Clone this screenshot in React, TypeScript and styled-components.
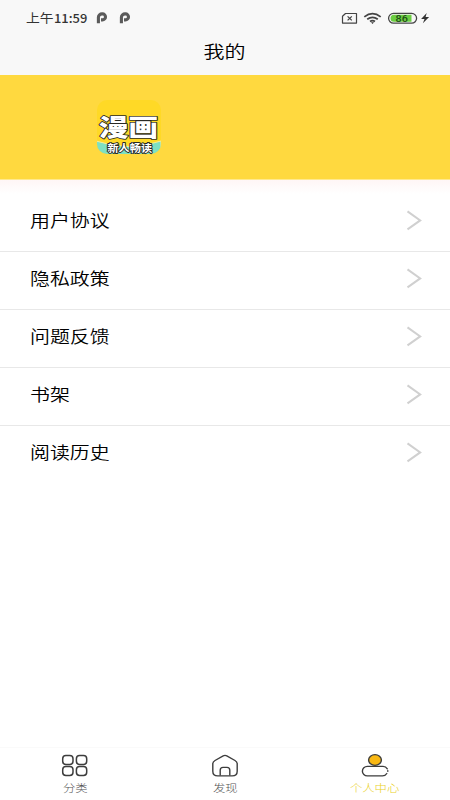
import React from 'react';
import styled, { createGlobalStyle } from 'styled-components';

const Global = createGlobalStyle`
  * { box-sizing: border-box; }
  body { margin: 0; background: #fff; font-family: "Noto Sans CJK SC", sans-serif; }
`;

const Screen = styled.div`
  width: 450px;
  height: 800px;
  display: flex;
  flex-direction: column;
  background: #fff;
  overflow: hidden;
`;

const StatusBar = styled.div`
  height: 36px;
  flex: none;
  display: flex;
  align-items: center;
  justify-content: space-between;
  padding: 0 20px 0 26px;
  background: #f8f8f8;
`;

const StatusGroup = styled.div`
  display: flex;
  align-items: center;
`;

const Wide = styled.span<{ $size: number; $scale: number; $color?: string; $origin?: string; $weight?: number }>`
  display: block;
  white-space: nowrap;
  font-size: ${p => p.$size}px;
  font-weight: ${p => p.$weight ?? 400};
  line-height: 1.4;
  color: ${p => p.$color ?? '#000'};
  transform: scaleX(${p => p.$scale});
  transform-origin: ${p => p.$origin ?? 'left'} center;
`;

const Clock = styled.div`
  width: 70px;
  display: flex;
  align-items: center;
  padding-top: 1px;
`;

const Ampm = styled.div`
  width: 28px;
`;

const TitleBar = styled.header`
  height: 39px;
  flex: none;
  display: flex;
  justify-content: center;
  padding: 3px 1px 0 0;
  background: #f8f8f8;
`;

const Banner = styled.section`
  height: 105px;
  flex: none;
  padding: 24px 0 0 96px;
  background: linear-gradient(#ffd93f 104px, #ffe98f 104px);
`;

const List = styled.main`
  flex: 1;
  padding-top: 14px;
  background: linear-gradient(#fff6f6, #fff 14px);
`;

const Row = styled.div<{ $last: boolean }>`
  height: 58px;
  display: flex;
  align-items: center;
  justify-content: space-between;
  padding: 0 28px 4px 30px;
  border-bottom: 1px solid ${p => (p.$last ? 'transparent' : '#e8e8e8')};
`;

const TabBar = styled.nav`
  height: 53px;
  flex: none;
  display: grid;
  grid-template-columns: repeat(3, 1fr);
  border-top: 1px solid #fafafa;
`;

const Tab = styled.div`
  display: flex;
  flex-direction: column;
  align-items: center;
  padding-top: 5px;
  gap: 4px;
`;

const Glyph = styled.svg`
  display: block;
  flex: none;
  overflow: visible;
`;

const Carrier = styled(Glyph)`
  margin-right: 11px;
`;

const PMark = () => (
  <Carrier width="12" height="13" viewBox="0 0 12 13" fill="none">
    <path d="M2.4 12.3V6.2A3.6 3.4 0 0 1 6 2.9h.5a3 3 0 0 1 0 6H5" stroke="#5a5a5a" strokeWidth="3.1" />
  </Carrier>
);

const StatusIcons = () => (
  <Glyph width="88" height="16" viewBox="342 10 88 16" fill="none" stroke="#444">
    <path d="M345.5 13.5h11v9.6h-14v-6.8z" strokeWidth="1.2" strokeLinejoin="round" />
    <path d="M347.6 16.4l4.2 4m0-4l-4.2 4" strokeWidth="1.3" />
    <path d="M364.3 16.8q8.2-6.4 16.4 0M367.2 19.3q5.3-4 10.6 0M370 21.5q2.5-1.9 5 0" strokeWidth="1.7" />
    <path d="M371 22.3h3l-1.5 1.7z" fill="#333" stroke="none" />
    <rect x="388.6" y="13.4" width="28" height="9.8" rx="4.9" strokeWidth="1.3" fill="#f8f8f8" />
    <path d="M394 14.8h17.5v7H394a3.5 3.5 0 0 1 0-7z" fill="#6bcd42" stroke="none" />
    <text x="395.6" y="21.8" fontFamily="Roboto, sans-serif" fontSize="9.6" fontWeight="500" textLength="12.3" lengthAdjust="spacingAndGlyphs" fill="#1e4d14" stroke="none">86</text>
    <path d="M426.7 13l-5.6 6h3.4l-1.6 4.2 6.2-6.2h-3.5z" fill="#333" stroke="none" />
  </Glyph>
);

const Logo = () => (
  <Glyph width="65" height="56" viewBox="0 0 65 56" fontFamily="Noto Sans CJK SC, sans-serif">
    <defs>
      <clipPath id="logoShape"><rect x="1" y="1" width="64" height="54" rx="10" /></clipPath>
    </defs>
    <rect x="1" y="1" width="64" height="54" rx="10" fill="#ffd926" />
    <path d="M0 42Q33 53 65 42V56H0z" fill="#7ee0c2" stroke="#f5ef9b" strokeWidth="1" clipPath="url(#logoShape)" />
    <g fill="#fff" stroke="#292923" strokeLinejoin="round" paintOrder="stroke">
      <text transform="translate(3 36.8) scale(1.25 1)" fontSize="23.6" fontWeight="900" strokeWidth="1.7">漫画</text>
      <text transform="translate(11.4 53) scale(1.14 1)" fontSize="9.8" fontWeight="700" strokeWidth="1.8">新人畅读</text>
    </g>
  </Glyph>
);

const Chevron = () => (
  <Glyph width="15" height="20" viewBox="0 0 15 20" fill="none">
    <path d="M.5 .4L13.2 9.4 .5 18.4" stroke="#d0d0d0" strokeWidth="2" />
  </Glyph>
);

const GridIcon = () => (
  <Glyph width="28" height="24" viewBox="0 0 28 24" fill="none" stroke="#3d3d3d" strokeWidth="1.5">
    <rect x="1.7" y="2.6" width="10.3" height="8.8" rx="3.2" />
    <rect x="15.4" y="2.6" width="10.3" height="8.8" rx="3.2" />
    <rect x="1.7" y="13.6" width="10.3" height="8.8" rx="3.2" />
    <rect x="15.4" y="13.6" width="10.3" height="8.8" rx="3.2" />
  </Glyph>
);

const HomeIcon = () => (
  <Glyph width="28" height="24" viewBox="0 0 28 24" fill="none" stroke="#3d3d3d" strokeWidth="1.4">
    <path d="M12.2 2.8Q14 2 15.8 2.8L24 7.5Q26.2 8.8 26.2 10.8V18.3Q26.2 22.9 21.2 22.9H6.8Q1.8 22.9 1.8 18.3V10.8Q1.8 8.8 4 7.5z" />
    <path d="M9.2 22.5V17.2Q9.2 14.4 12 14.4h4Q18.8 14.4 18.8 17.2V22.5" />
  </Glyph>
);

const PersonIcon = () => (
  <Glyph width="28" height="24" viewBox="0 0 28 24" stroke="#3d3d3d" strokeWidth="1.4">
    <ellipse cx="14" cy="7" rx="6.4" ry="5.4" fill="#f9b813" />
    <path d="M25.8 20.5Q24.4 22.9 21.5 22.9H6.3a4.9 4.75 0 0 1 0-9.5h15.4a5 4.8 0 0 1 4.6 2.4" fill="none" strokeLinecap="round" />
    <path d="M26.8 17.8v.5" strokeLinecap="round" />
  </Glyph>
);

const entries = ['用户协议', '隐私政策', '问题反馈', '书架', '阅读历史'];

const tabs = [
  { label: '分类', Icon: GridIcon, color: '#555' },
  { label: '发现', Icon: HomeIcon, color: '#555' },
  { label: '个人中心', Icon: PersonIcon, color: '#ead11f' },
];

export default function App() {
  return (
    <Screen>
      <Global />
      <StatusBar>
        <StatusGroup>
          <Clock>
            <Ampm><Wide $size={12} $scale={1.15} $color="#333">上午</Wide></Ampm>
            <Wide $size={12.3} $scale={1.05} $color="#333" $weight={500}>11:59</Wide>
          </Clock>
          <PMark />
          <PMark />
        </StatusGroup>
        <StatusIcons />
      </StatusBar>
      <TitleBar>
        <Wide $size={17.5} $scale={1.2} $origin="center" $weight={350}>我的</Wide>
      </TitleBar>
      <Banner><Logo /></Banner>
      <List>
        {entries.map((entry, i) => (
          <Row key={entry} $last={i === entries.length - 1}>
            <Wide $size={16.6} $scale={1.2} $weight={350}>{entry}</Wide>
            <Chevron />
          </Row>
        ))}
      </List>
      <TabBar>
        {tabs.map(({ label, Icon, color }) => (
          <Tab key={label}>
            <Icon />
            <Wide $size={10.3} $scale={1.2} $color={color} $origin="center" $weight={300}>{label}</Wide>
          </Tab>
        ))}
      </TabBar>
    </Screen>
  );
}
